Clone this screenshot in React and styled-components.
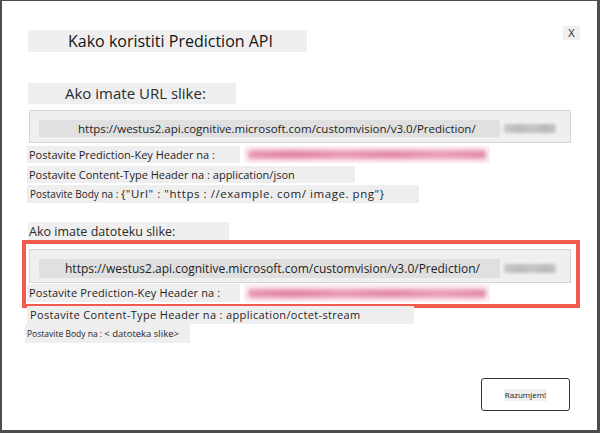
import React from 'react';
import styled, { createGlobalStyle } from 'styled-components';

const GlobalStyle = createGlobalStyle`
	html, body {
		margin: 0;
		padding: 0;
		background: #ffffff;
	}
	body {
		font-family: "Open Sans", "Noto Sans", sans-serif;
		color: #222;
	}
`;

const StyledDialog = styled.div`
	box-sizing: border-box;
	width: 600px;
	height: 433px;
	background: #ffffff;
	border: 2px solid #4d4d4d;
	border-top-width: 1px;
	border-right-width: 3px;
	border-bottom-width: 3px;
	padding: 25px 17px 0 25px;
	display: flex;
	flex-direction: column;
`;

const StyledHeader = styled.div`
	display: flex;
	justify-content: space-between;
	align-items: flex-start;
`;

const StyledTitle = styled.div`
	box-sizing: border-box;
	width: 279px;
	height: 22px;
	margin: 4px 0 0 1px;
	padding-left: 40px;
	background: #efefef;
	font-size: 16px;
	line-height: 22px;
	color: #161616;
	white-space: nowrap;
`;

const StyledClose = styled.button`
	width: 17px;
	height: 14px;
	padding: 0;
	border: 0;
	background: #efefef;
	font-family: inherit;
	font-size: 11px;
	line-height: 14px;
	color: #2a2a2a;
	cursor: pointer;
`;

const StyledSectionLabel = styled.div`
	box-sizing: border-box;
	width: ${(p) => p.$w}px;
	height: ${(p) => p.$h}px;
	margin: ${(p) => p.$mt}px 0 0 1px;
	padding-left: ${(p) => p.$pl}px;
	background: #efefef;
	font-size: ${(p) => p.$size}px;
	line-height: ${(p) => p.$h}px;
	color: #2a2a2a;
	white-space: nowrap;
`;

const StyledUrlBox = styled.div`
	box-sizing: border-box;
	height: ${(p) => p.$h}px;
	margin: ${(p) => p.$mt}px ${(p) => p.$mr}px 0 ${(p) => p.$ml}px;
	padding: 9px 0 0 9px;
	background: #efefef;
	border: 1px solid #d6d6d6;
	display: flex;
	align-items: flex-start;
	gap: 4px;
`;

const StyledUrlField = styled.div`
	box-sizing: border-box;
	width: 461px;
	height: ${(p) => p.$h}px;
	padding-left: ${(p) => p.$pl}px;
	background: #e0e0e0;
	font-size: ${(p) => p.$size}px;
	line-height: ${(p) => p.$h}px;
	color: #1e1e1e;
	white-space: nowrap;
`;

const StyledBlurKey = styled.div`
	width: 52px;
	height: 9px;
	margin-top: ${(p) => p.$mt}px;
	background: linear-gradient(90deg, #c8c8c8 0%, #bcbcbc 30%, #c6c6c6 55%, #b9b9b9 80%, #c6c6c6 100%);
	border-radius: 3px;
	filter: blur(1.8px);
`;

const StyledRow = styled.div`
	display: flex;
	align-items: stretch;
	gap: 4px;
	height: ${(p) => p.$h}px;
	margin: ${(p) => p.$mt}px 0 0 ${(p) => p.$ml}px;
`;

const StyledRowLabel = styled.div`
	box-sizing: border-box;
	width: ${(p) => p.$w}px;
	padding-left: ${(p) => p.$pl}px;
	background: #efeeef;
	font-size: ${(p) => p.$size}px;
	line-height: ${(p) => p.$h}px;
	letter-spacing: ${(p) => p.$ls || 0}px;
	color: #1e1e1e;
	white-space: nowrap;
`;

const StyledSmall = styled.span`
	font-size: ${(p) => p.$size}px;
	letter-spacing: 0;
`;

const StyledRedacted = styled.div`
	width: 246px;
	background: #fcf0f3;
	display: flex;
	align-items: center;
	padding: 0 4px;
	box-sizing: border-box;

	&::before {
		content: '';
		flex: 1;
		height: 9px;
		border-radius: 3px;
		background: linear-gradient(90deg, #e996b0 0%, #e284a2 20%, #ea9ab3 40%, #e389a5 60%, #eb9fb7 80%, #e48ba7 100%);
		filter: blur(2px);
	}
`;

const StyledHighlight = styled.div`
	margin: -1px 0 0 -5px;
	padding: 5px 5px 2px 0;
	border: 4px solid #f25a4e;
	display: flex;
	flex-direction: column;
`;

const StyledFooter = styled.div`
	display: flex;
	justify-content: flex-end;
	margin: 35px 10px 0 0;
`;

const StyledButton = styled.button`
	box-sizing: border-box;
	width: 89px;
	height: 33px;
	border: 1.5px solid #333;
	border-radius: 3px;
	background: #ffffff;
	display: flex;
	align-items: center;
	justify-content: center;
	padding: 0;
	cursor: pointer;

	> span {
		background: #efefef;
		font-family: "Open Sans", sans-serif;
		font-size: 8px;
		line-height: 12px;
		padding: 0 1px;
		color: #222;
	}
`;

const URL = 'https://westus2.api.cognitive.microsoft.com/customvision/v3.0/Prediction/';

const App = () => (
	<>
		<GlobalStyle />
		<StyledDialog>
			<StyledHeader>
				<StyledTitle>Kako koristiti Prediction API</StyledTitle>
				<StyledClose>X</StyledClose>
			</StyledHeader>

			<StyledSectionLabel $w={208} $h={21} $mt={31} $pl={37} $size={15}>
				Ako imate URL slike:
			</StyledSectionLabel>
			<StyledUrlBox $h={33} $mt={6} $ml={2} $mr={9}>
				<StyledUrlField $h={17} $pl={39} $size={11.5}>{URL}</StyledUrlField>
				<StyledBlurKey $mt={4} />
			</StyledUrlBox>
			<StyledRow $h={17} $mt={3} $ml={0}>
				<StyledRowLabel $w={213} $pl={2} $h={17} $size={11}>Postavite Prediction-Key Header na :</StyledRowLabel>
				<StyledRedacted />
			</StyledRow>
			<StyledRow $h={17} $mt={3} $ml={0}>
				<StyledRowLabel $w={328} $pl={2} $h={17} $size={11}>
					Postavite Content-Type Header na : application/json
				</StyledRowLabel>
			</StyledRow>
			<StyledRow $h={18} $mt={2} $ml={0}>
				<StyledRowLabel $w={392} $pl={3} $h={18} $size={11.5} $ls={0.55}>
					<StyledSmall $size={10}>Postavite Body na : </StyledSmall>
					{'{"Url" : "https : //example. com/ image. png"}'}
				</StyledRowLabel>
			</StyledRow>

			<StyledSectionLabel $w={201} $h={19} $mt={19} $pl={1} $size={12.5}>
				Ako imate datoteku slike:
			</StyledSectionLabel>
			<StyledHighlight>
				<StyledUrlBox $h={34} $mt={0} $ml={3} $mr={0}>
					<StyledUrlField $h={19} $pl={26} $size={12}>{URL}</StyledUrlField>
					<StyledBlurKey $mt={5} />
				</StyledUrlBox>
				<StyledRow $h={18} $mt={1} $ml={1}>
					<StyledRowLabel $w={213} $pl={2} $h={18} $size={11} $ls={0.15}>Postavite Prediction-Key Header na :</StyledRowLabel>
					<StyledRedacted />
				</StyledRow>
			</StyledHighlight>
			<StyledRow $h={18} $mt={-2} $ml={0}>
				<StyledRowLabel $w={387} $pl={3} $h={18} $size={11} $ls={0.35}>
					Postavite Content-Type Header na : application/octet-stream
				</StyledRowLabel>
			</StyledRow>
			<StyledRow $h={19} $mt={0} $ml={-2}>
				<StyledRowLabel $w={165} $pl={2} $h={19} $size={9.5}>
					<StyledSmall $size={8.5}>Postavite Body na : </StyledSmall>
					{'< datoteka slike>'}
				</StyledRowLabel>
			</StyledRow>

			<StyledFooter>
				<StyledButton>
					<span>Razumjem!</span>
				</StyledButton>
			</StyledFooter>
		</StyledDialog>
	</>
);

export default App;
